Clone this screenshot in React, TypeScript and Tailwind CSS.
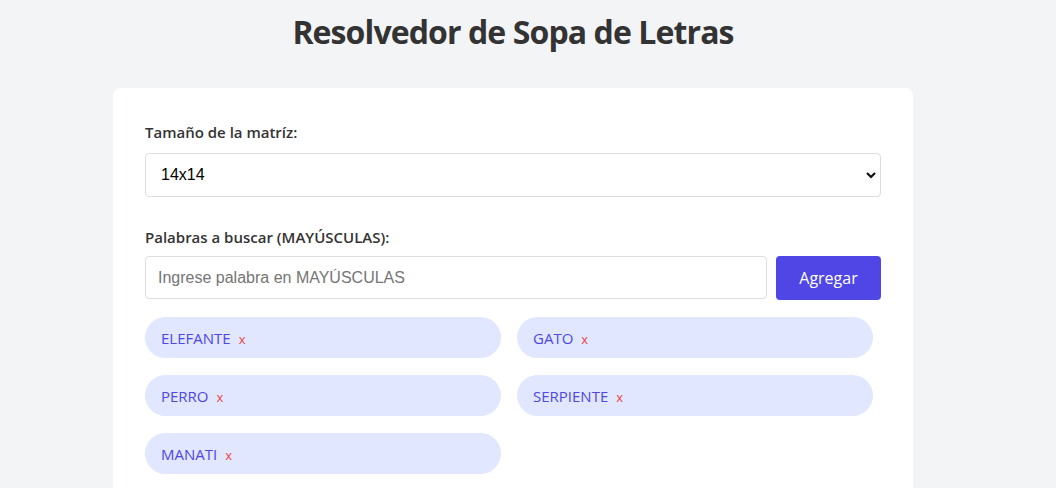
import React from "react";

const words = ["ELEFANTE", "GATO", "PERRO", "SERPIENTE", "MANATI"];

export default function App() {
  return (
    <div
      className="min-h-screen bg-[#f3f4f6] pr-[30px] text-[#333333]"
      style={{ fontFamily: '"Open Sans", "Noto Sans", sans-serif' }}
    >
      <h1 className="pt-[12px] text-center text-[32px] font-bold leading-[40px] tracking-[-0.9px] text-[#333333]">
        Resolvedor de Sopa de Letras
      </h1>
      <div className="mx-auto mt-[36px] w-[800px] rounded-lg bg-white px-8 pt-8 pb-8">
        <label className="block text-[15px] font-semibold leading-[24px] mb-[9px]">
          Tamaño de la matríz:
        </label>
        <div className="relative">
          <select
            defaultValue="14"
            className="block h-[44px] w-full appearance-none rounded border border-[#dddddd] bg-white pl-[15px] text-[16px] text-black"
            style={{ fontFamily: '"Liberation Sans", Arial, sans-serif' }}
          >
            <option value="14">14x14</option>
          </select>
          <svg
            className="pointer-events-none absolute right-[3px] top-[15px]"
            width="14"
            height="14"
            viewBox="0 0 14 14"
          >
            <path d="M3 5 L7 9 L11 5" fill="none" stroke="#111" strokeWidth="2.2" />
          </svg>
        </div>

        <label className="mt-[28px] block text-[15px] font-semibold leading-[24px] mb-[7px]">
          Palabras a buscar (MAYÚSCULAS):
        </label>
        <div className="flex gap-[9px]">
          <input
            placeholder="Ingrese palabra en MAYÚSCULAS"
            className="h-[43px] flex-1 rounded border border-[#dddddd] px-[12px] text-[16px] placeholder:text-[#757575] outline-none"
            style={{ fontFamily: '"Liberation Sans", Arial, sans-serif' }}
          />
          <button className="h-[44px] w-[105px] rounded bg-[#4f46e5] text-[16px] text-white">
            Agregar
          </button>
        </div>

        <div className="mt-[17px] grid grid-cols-[356px_356px] gap-x-4 gap-y-[17px]">
          {words.map((w) => (
            <div
              key={w}
              className="flex h-[41px] items-center rounded-full bg-[#e0e7ff] pl-4 pt-[1px] text-[15px] text-[#4f46e5]"
            >
              <span>{w}</span>
              <span className="ml-[8px] mt-[3px] text-[13px] text-[#ef4444]">x</span>
            </div>
          ))}
        </div>
      </div>
    </div>
  );
}
